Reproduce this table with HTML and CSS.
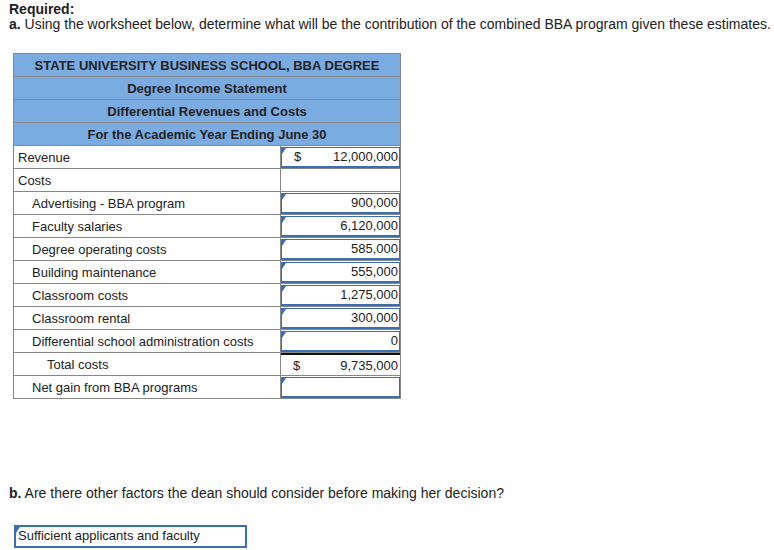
FILE: index.html
```html
<!DOCTYPE html>
<html>
<head>
<meta charset="utf-8">
<link rel="stylesheet" href="styles.css">
</head>
<body>
<div class="page">
  <p class="req">Required:</p>
  <p class="q"><b>a.</b> Using the worksheet below, determine what will be the contribution of the combined BBA program given these estimates.</p>
  <table class="ws">
    <colgroup><col class="c1"><col class="c2"></colgroup>
    <tr class="hd"><td colspan="2">STATE UNIVERSITY BUSINESS SCHOOL, BBA DEGREE</td></tr>
    <tr class="hd"><td colspan="2">Degree Income Statement</td></tr>
    <tr class="hd"><td colspan="2">Differential Revenues and Costs</td></tr>
    <tr class="hd"><td colspan="2">For the Academic Year Ending June 30</td></tr>
    <tr><td class="lbl">Revenue</td><td class="val"><div class="inp"><span class="cur">$</span><span>12,000,000</span></div></td></tr>
    <tr><td class="lbl">Costs</td><td class="val"></td></tr>
    <tr><td class="lbl in1">Advertising - BBA program</td><td class="val"><div class="inp"><span></span><span>900,000</span></div></td></tr>
    <tr><td class="lbl in1">Faculty salaries</td><td class="val"><div class="inp"><span></span><span>6,120,000</span></div></td></tr>
    <tr><td class="lbl in1">Degree operating costs</td><td class="val"><div class="inp"><span></span><span>585,000</span></div></td></tr>
    <tr><td class="lbl in1">Building maintenance</td><td class="val"><div class="inp"><span></span><span>555,000</span></div></td></tr>
    <tr><td class="lbl in1">Classroom costs</td><td class="val"><div class="inp"><span></span><span>1,275,000</span></div></td></tr>
    <tr><td class="lbl in1">Classroom rental</td><td class="val"><div class="inp"><span></span><span>300,000</span></div></td></tr>
    <tr><td class="lbl in1">Differential school administration costs</td><td class="val"><div class="inp"><span></span><span>0</span></div></td></tr>
    <tr><td class="lbl in2">Total costs</td><td class="val total"><div class="calc"><span class="cur">$</span><span>9,735,000</span></div></td></tr>
    <tr><td class="lbl in1">Net gain from BBA programs</td><td class="val"><div class="inp"><span></span><span></span></div></td></tr>
  </table>
  <p class="q qb"><b>b.</b> Are there other factors the dean should consider before making her decision?</p>
  <div class="answer">Sufficient applicants and faculty</div>
</div>
</body>
</html>
```
FILE: styles.css
```css
body {
  margin: 0;
  font-family: "Liberation Sans", Arial, sans-serif;
  color: #222;
  background: #fff;
}
.page {
  padding: 2px 0 0 9px;
}
.req {
  margin: 0;
  font-size: 14px;
  font-weight: bold;
  line-height: 15px;
}
.q {
  margin: 0;
  font-size: 14px;
  line-height: 15px;
}
.ws {
  margin: 21px 0 0 4px;
  border-collapse: collapse;
  table-layout: fixed;
  font-size: 13px;
  width: 387px;
  border: 1px solid #888;
}
.c1 { width: 267px; }
.c2 { width: 120px; }
.ws td {
  border: 1px solid #888;
  height: 22px;
  padding: 0;
  vertical-align: middle;
  white-space: nowrap;
}
.hd td {
  background: #7aace2;
  text-align: center;
  font-weight: bold;
  color: #222;
}
.lbl {
  padding-left: 4px !important;
}
.lbl.in1 { padding-left: 18px !important; }
.lbl.in2 { padding-left: 33px !important; }
.val {
  position: relative;
}
.inp, .calc {
  display: flex;
  justify-content: space-between;
  align-items: center;
  height: 21px;
  box-sizing: border-box;
  border: 1px solid #3b6eb4;
  padding: 0 1px 0 12px;
  position: relative;
}
.inp::before, .answer::before {
  content: "";
  position: absolute;
  left: 0;
  top: 0;
  border-top: 6px solid #3b6eb4;
  border-right: 4px solid transparent;
}
.inp {
  border-width: 1px 1px 2px 1px;
}
.calc {
  border: none;
  border-top: 2px solid #111;
  padding-right: 2px;
  height: 22px;
}
.cur { display: inline-block; }
.qb {
  margin-top: 87px;
}
.answer {
  position: relative;
  margin: 24px 0 0 5px;
  width: 233px;
  height: 23px;
  box-sizing: border-box;
  border: 2px solid #3b6eb4;
  font-size: 13px;
  line-height: 18px;
  padding-left: 2px;
}
```
